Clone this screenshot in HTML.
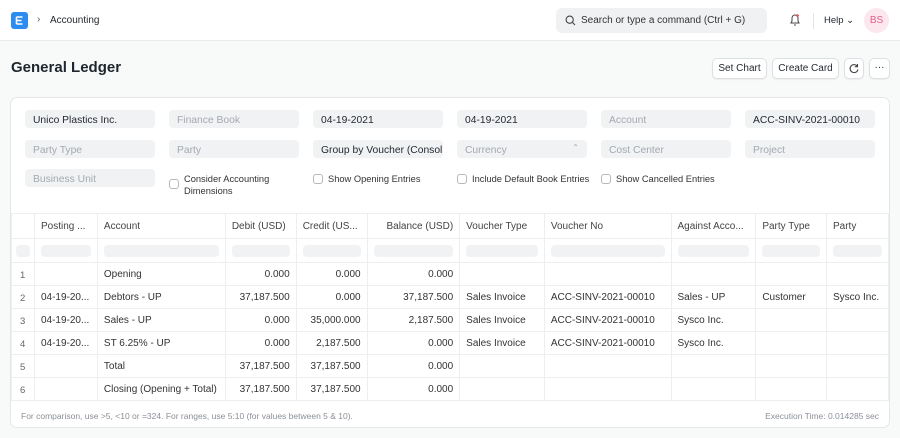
<!DOCTYPE html>
<html><head><meta charset="utf-8"><style>
*{box-sizing:border-box;margin:0;padding:0}
body{width:900px;height:438px;overflow:hidden;background:#f8f9f9;font-family:"Liberation Sans",sans-serif;color:#1f272e;position:relative;font-size:10px}
.a{position:absolute}
.nav{left:0;top:0;width:900px;height:41px;background:#fff;border-bottom:1px solid #e8eaec}
.logo{left:11px;top:12px;width:17px;height:17px;background:#2d8cf0;border-radius:3px}
.search{left:556px;top:8px;width:211px;height:25px;background:#f0f1f3;border-radius:6px;font-size:10px;color:#333;padding:7px 0 0 25px}
.btn{background:#fff;border:1px solid #dcdfe3;border-radius:5px;font-size:10px;text-align:center;box-shadow:0 1px 1px rgba(0,0,0,.05)}
.card{left:10px;top:97px;width:880px;height:331px;background:#fff;border:1px solid #e4e6e9;border-radius:7px;overflow:hidden}
.f{position:absolute;width:130px;height:18px;background:#f1f2f4;border-radius:4px;font-size:10.3px;padding:5px 0 0 8px;color:#1f272e;white-space:nowrap;overflow:hidden}
.f.p{color:#a3a9b0}
.cb{position:absolute;font-size:9.3px;color:#333}
.cb i{position:absolute;left:0;top:1px;width:10px;height:10px;border:1px solid #b5bac0;border-radius:3px}
.cb span{position:absolute;left:15px;top:0;white-space:nowrap;line-height:12px}
table{position:absolute;left:0;top:115px;border-collapse:collapse;font-size:10px;table-layout:fixed}
td{border:1px solid #edeef0;height:23px;padding:1px 6px 0;white-space:nowrap;overflow:hidden;color:#333}
tr.h td{height:25px;color:#444}
tr.fl td{height:24px}
.r{text-align:right}
.n{color:#666;font-size:9.5px;padding:2px 8px 0}
.fb{height:12px;background:#f1f2f4;border-radius:4px}
</style></head><body>
<div class="a nav"></div>
<div class="a logo"><svg width="17" height="17" viewBox="0 0 17 17"><path d="M5.5 5h6M5.5 8.5h5M5.5 12h6M5.5 5v7" stroke="#fff" stroke-width="1.6" fill="none"/></svg></div>
<div class="a" style="left:37px;top:14px;font-size:10px;color:#555">›</div>
<div class="a" style="left:50px;top:15px;font-size:10px">Accounting</div>
<div class="a search"><svg class="a" style="left:9px;top:7px" width="11" height="11" viewBox="0 0 11 11"><circle cx="4.7" cy="4.7" r="3.6" stroke="#444" stroke-width="1.1" fill="none"/><path d="M7.4 7.4L10 10" stroke="#444" stroke-width="1.1"/></svg>Search or type a command (Ctrl + G)</div>
<svg class="a" style="left:789px;top:13px" width="12" height="14" viewBox="0 0 12 14"><path d="M2 10h8l-1-2V5a3 3 0 0 0-6 0v3z M5 12h2" stroke="#444" stroke-width="1" fill="none"/><circle cx="8.5" cy="2.5" r="1.3" fill="#e24c4c"/></svg>
<div class="a" style="left:813px;top:13px;width:1px;height:16px;background:#e2e4e7"></div>
<div class="a" style="left:824px;top:15px;font-size:9.5px">Help ⌄</div>
<div class="a" style="left:864px;top:8px;width:25px;height:25px;border-radius:50%;background:#fce7ee;color:#e0608a;font-size:10px;text-align:center;line-height:25px">BS</div>
<div class="a" style="left:11px;top:59px;font-size:15px;font-weight:bold">General Ledger</div>
<div class="a btn" style="left:712px;top:58px;width:55px;height:21px;line-height:19px">Set Chart</div>
<div class="a btn" style="left:772px;top:58px;width:67px;height:21px;line-height:19px">Create Card</div>
<div class="a btn" style="left:844px;top:58px;width:20px;height:21px"><svg width="18" height="19" viewBox="0 0 18 19"><path d="M12.5 7.5A4 4 0 1 0 13 10.5M12.5 5v2.7h-2.7" stroke="#444" stroke-width="1.1" fill="none"/></svg></div>
<div class="a btn" style="left:869px;top:58px;width:21px;height:21px;line-height:17px">···</div>
<div class="a card">
<div class="f" style="left:14px;top:12px">Unico Plastics Inc.</div>
<div class="f p" style="left:158px;top:12px">Finance Book</div>
<div class="f" style="left:302px;top:12px">04-19-2021</div>
<div class="f" style="left:446px;top:12px">04-19-2021</div>
<div class="f p" style="left:590px;top:12px">Account</div>
<div class="f" style="left:734px;top:12px">ACC-SINV-2021-00010</div>
<div class="f p" style="left:14px;top:42px">Party Type</div>
<div class="f p" style="left:158px;top:42px">Party</div>
<div class="f" style="left:302px;top:42px">Group by Voucher (Consol</div>
<div class="f p" style="left:446px;top:42px">Currency<span style="position:absolute;right:8px;top:3px;font-size:8px">⌃</span></div>
<div class="f p" style="left:590px;top:42px">Cost Center</div>
<div class="f p" style="left:734px;top:42px">Project</div>
<div class="f p" style="left:14px;top:71px">Business Unit</div>
<div class="cb" style="left:158px;top:75px"><i style="top:6px"></i><span>Consider Accounting<br>Dimensions</span></div>
<div class="cb" style="left:302px;top:75px"><i></i><span>Show Opening Entries</span></div>
<div class="cb" style="left:446px;top:75px"><i></i><span>Include Default Book Entries</span></div>
<div class="cb" style="left:590px;top:75px"><i></i><span>Show Cancelled Entries</span></div>
<table>
<colgroup><col style="width:23px"><col style="width:63px"><col style="width:128px"><col style="width:71px"><col style="width:71px"><col style="width:93px"><col style="width:85px"><col style="width:127px"><col style="width:85px"><col style="width:71px"><col style="width:62px"></colgroup>
<tr class="h"><td></td><td>Posting ...</td><td>Account</td><td>Debit (USD)</td><td>Credit (US...</td><td class="r">Balance (USD)</td><td>Voucher Type</td><td>Voucher No</td><td>Against Acco...</td><td>Party Type</td><td>Party</td></tr>
<tr class="fl"><td style="padding:0 4px"><div class="fb"></div></td><td><div class="fb"></div></td><td><div class="fb"></div></td><td><div class="fb"></div></td><td><div class="fb"></div></td><td><div class="fb"></div></td><td><div class="fb"></div></td><td><div class="fb"></div></td><td><div class="fb"></div></td><td><div class="fb"></div></td><td><div class="fb"></div></td></tr>
<tr><td class="n">1</td><td></td><td>Opening</td><td class="r">0.000</td><td class="r">0.000</td><td class="r">0.000</td><td></td><td></td><td></td><td></td><td></td></tr>
<tr><td class="n">2</td><td>04-19-20...</td><td>Debtors - UP</td><td class="r">37,187.500</td><td class="r">0.000</td><td class="r">37,187.500</td><td>Sales Invoice</td><td>ACC-SINV-2021-00010</td><td>Sales - UP</td><td>Customer</td><td>Sysco Inc.</td></tr>
<tr><td class="n">3</td><td>04-19-20...</td><td>Sales - UP</td><td class="r">0.000</td><td class="r">35,000.000</td><td class="r">2,187.500</td><td>Sales Invoice</td><td>ACC-SINV-2021-00010</td><td>Sysco Inc.</td><td></td><td></td></tr>
<tr><td class="n">4</td><td>04-19-20...</td><td>ST 6.25% - UP</td><td class="r">0.000</td><td class="r">2,187.500</td><td class="r">0.000</td><td>Sales Invoice</td><td>ACC-SINV-2021-00010</td><td>Sysco Inc.</td><td></td><td></td></tr>
<tr><td class="n">5</td><td></td><td>Total</td><td class="r">37,187.500</td><td class="r">37,187.500</td><td class="r">0.000</td><td></td><td></td><td></td><td></td><td></td></tr>
<tr><td class="n">6</td><td></td><td>Closing (Opening + Total)</td><td class="r">37,187.500</td><td class="r">37,187.500</td><td class="r">0.000</td><td></td><td></td><td></td><td></td><td></td></tr>
</table>
<div class="a" style="left:10px;top:313px;font-size:8.5px;color:#8a9097">For comparison, use &gt;5, &lt;10 or =324. For ranges, use 5:10 (for values between 5 &amp; 10).</div>
<div class="a" style="right:10px;top:313px;font-size:8.5px;color:#8a9097">Execution Time: 0.014285 sec</div>
</div>
</body></html>
